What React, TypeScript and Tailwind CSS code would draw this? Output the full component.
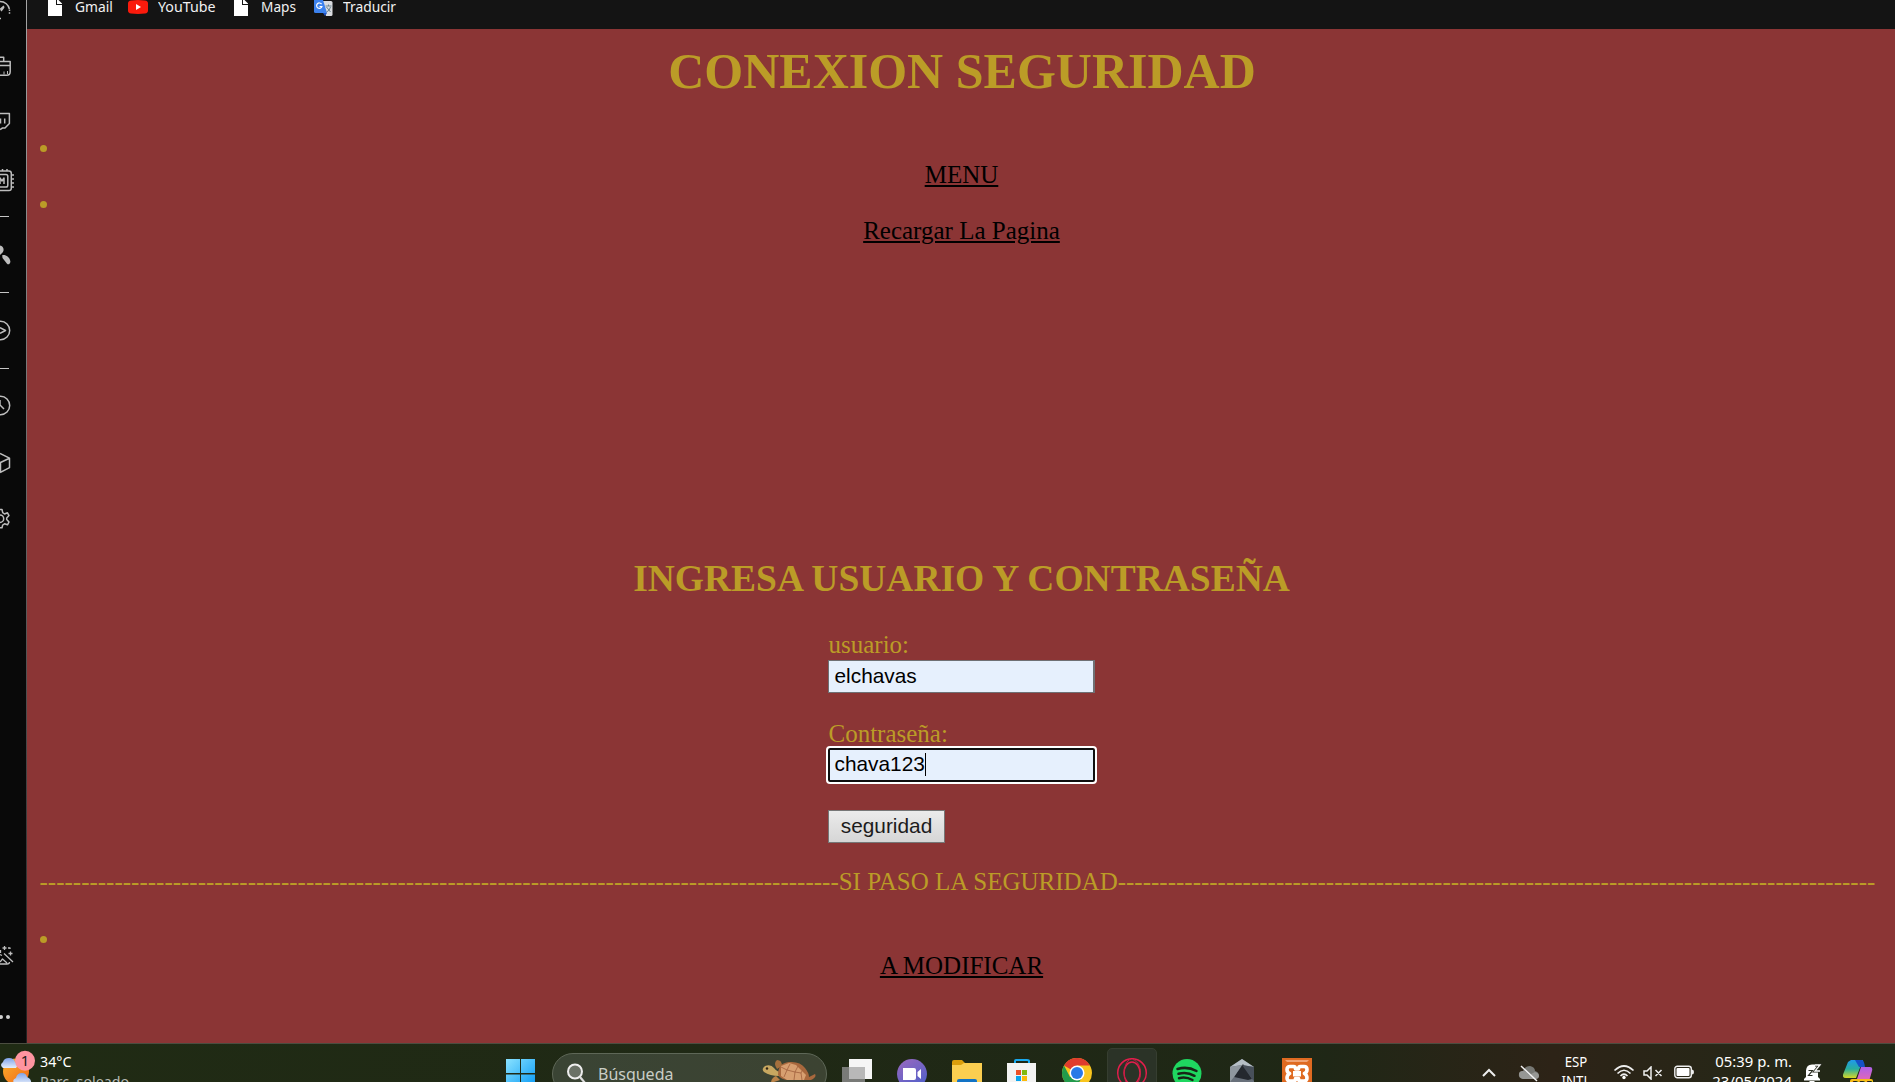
import type { ReactNode } from "react";

const LEFT_DASHES = "-".repeat(96);
const RIGHT_DASHES = "-".repeat(91);

function SideIcon({ className, h, children }: { className: string; h: number; children: ReactNode }) {
  return (
    <svg
      className={`block shrink-0 ${className}`}
      width="16"
      height={h}
      viewBox={`0 0 16 ${h}`}
      fill="none"
      stroke="#bdbdbd"
      strokeWidth="1.5"
      strokeLinejoin="round"
    >
      {children}
    </svg>
  );
}

function Divider({ className }: { className: string }) {
  return <div className={`h-px w-[9px] shrink-0 bg-[#c5c5c5] ${className}`} />;
}

function Sidebar() {
  return (
    <nav className="flex h-full w-[27px] shrink-0 flex-col overflow-hidden bg-[#090909]">
      <SideIcon className="" h={24}>
        <path d="M0 1.5C5 1.5 8.6 5 9.4 9" />
        <path d="M9.5 9.5V15" strokeDasharray="1.5 1.2" />
        <path d="M0 9.5 4 6M1 11l3-4M0 18.5h1" />
      </SideIcon>
      <SideIcon className="mt-[30px]" h={26}>
        <path d="M0 3.2h3.700v4M0 7.500h10.200v10.200q0 3.500-3.500 3.500H0M0 11.500h10" />
        <path d="M4 17.500v3M7.500 17v3" strokeWidth="1" />
      </SideIcon>
      <SideIcon className="mt-[30px]" h={24}>
        <path d="M0 3.500h9.400v10L5 18H2.500L0 19.500M4.700 8.500v5M.5 8.500v5" />
      </SideIcon>
      <SideIcon className="mt-[32px]" h={28}>
        <path d="M0 5h9q2.300 0 2.300 2.300v15q0 2.300-2.300 2.300H0M0 8.500h6q1.800 0 1.800 1.800v9q0 1.800-1.800 1.800H0" />
        <path d="M2.500 3v2M7 3v2M11 9h3M11 13h3M11 17h3M11 21h3M0 18v-6l2 3 2-3v6" />
      </SideIcon>
      <Divider className="mt-[22px]" />
      <SideIcon className="mt-[27px]" h={24}>
        <path
          d="M0 1.500C3.500 2 4.500 6 2.800 8.200L0 11ZM2.200 11.200C4.600 10 10 12.600 10.400 17.500 10.200 20 8.300 21.300 6.800 19.500L2.500 14Z"
          fill="#bdbdbd"
          stroke="none"
        />
      </SideIcon>
      <Divider className="mt-[24px]" />
      <SideIcon className="mt-[27px]" h={22}>
        <circle cx=".5" cy="10.500" r="9.200" />
        <path d="M0 7.600 5.500 10.500 0 13.400" />
      </SideIcon>
      <Divider className="mt-[26px]" />
      <SideIcon className="mt-[26px]" h={22}>
        <circle cx=".5" cy="10.500" r="9.200" />
        <path d="M0 5v5l4 4" />
      </SideIcon>
      <SideIcon className="mt-[34px]" h={24}>
        <path d="m0 2.500 9.500 4.700v9.400L0 21.500M.5 11.500v10M.5 11.500l9-4.300M0 11.300l.5.2" />
      </SideIcon>
      <SideIcon className="mt-[32px]" h={24}>
        <path d="M0 2.500h2l.7 3.200L4.500 7l3-1.200 1.500 2.800L6.700 11v1.500L9 15l-1.500 2.800-3-1L2.700 18 2 20.800H0" />
        <circle cx="0" cy="11.700" r="3.700" />
      </SideIcon>
      <SideIcon className="mt-[412px]" h={24}>
        <path
          d="M0 21h7q2.500 0 2.500-2M0 19l2.500-3L7 20M0 11.500l2 1M4 10.500l9 8.500M4.500 3v4M2.500 5h4M10.500 8.500v4M8.500 10.500h4M.5 7v3M8 5h2v1"
          strokeWidth="1.300"
        />
      </SideIcon>
      <SideIcon className="mt-[46px]" h={8}>
        <g fill="#d0d0d0" stroke="none">
          <circle cx="1" cy="4" r="2" />
          <circle cx="8" cy="4" r="2" />
        </g>
      </SideIcon>
    </nav>
  );
}

function PageFile() {
  return (
    <svg width="15" height="20" viewBox="0 0 15 20" className="block">
      <path d="M0 0h8v5h6v11H0Z" fill="#fff" />
      <path d="M9 0h1.500L14 3.500V4H9Z" fill="#fff" />
    </svg>
  );
}

function Bookmarks() {
  return (
    <header className="flex h-[29px] w-full shrink-0 bg-[#141414] pl-[21px] font-['Noto_Sans',sans-serif] text-[14.700px] leading-[20px] text-[#f1f1f1]">
      <a className="flex w-[80px]">
        <PageFile />
        <span className="-mt-[4px] ml-[12px] origin-left scale-x-[0.94]">Gmail</span>
      </a>
      <a className="flex w-[106px]">
        <svg width="20" height="15" viewBox="0 0 20 15" className="block">
          <path d="M3 .5Q10-.5 17 .5q3 .3 3 3v7q0 2.700-3 3-7 .9-14 0-3-.3-3-3v-7Q0 .8 3 .5Z" fill="#fa1a0c" />
          <path d="m8 4 5 3-5 3Z" fill="#fff" />
        </svg>
        <span className="-mt-[4px] ml-[10px] origin-left scale-x-[0.97]">YouTube</span>
      </a>
      <a className="flex w-[80px]">
        <PageFile />
        <span className="-mt-[4px] ml-[12px] origin-left scale-x-[0.93]">Maps</span>
      </a>
      <a className="flex">
        <svg width="19" height="17" viewBox="0 0 19 17" className="block">
          <path d="M8 1h9q1.500 0 1.500 1.500v12q0 1.500-1.500 1.500h-5Z" fill="#dadce0" />
          <path d="M0 0h9l4 13H1.500Q0 13 0 11.500Z" fill="#3c82ee" />
          <path d="M9 13h4l-2 3Z" fill="#1e53c5" />
          <path d="M7.600 4.200A2.700 2.700 0 1 0 7.900 6.500H5.500" fill="none" stroke="#fff" strokeWidth="1.200" />
          <path d="M11.500 6h6M14.500 4.500V6M12.500 7l4 5M16.500 7q-1 4-4 5" fill="none" stroke="#6a8590" />
        </svg>
        <span className="-mt-[4px] ml-[10px] origin-left scale-x-[0.94]">Traducir</span>
      </a>
    </header>
  );
}

function Item({ children }: { children: ReactNode }) {
  return (
    <li className="block">
      <div className="flex h-[28px] items-start">
        <span className="mt-[12px] block size-[7px] rounded-full bg-[#bb9c27]" />
      </div>
      <a className="block h-[28px] text-center text-black underline">{children}</a>
    </li>
  );
}

function SecurityPage() {
  return (
    <main className="flex min-h-0 flex-1 flex-col overflow-hidden bg-[#8b3535] pt-[14px] pr-[12px] pl-[13px] font-['Liberation_Serif',serif] text-[25px] leading-[28px] text-[#bb9c27]">
      <h1 className="h-[56px] pl-px text-center text-[50px] leading-[56px] font-bold">CONEXION SEGURIDAD</h1>
      <ul className="mt-[34px] flex flex-col">
        <Item>MENU</Item>
        <Item>Recargar La Pagina</Item>
      </ul>
      <h2 className="mt-[312px] h-[44px] text-center text-[37.500px] leading-[43px] font-bold">
        INGRESA USUARIO Y CONTRASEÑA
      </h2>
      <form className="mx-auto mt-[30px] flex w-[267px] flex-col items-start">
        <label className="h-[29px] pl-[0.500px]">usuario:</label>
        <div className="h-[33px] w-[267px] border border-r-2 border-[#6f7074] bg-[#e6f0fd] pl-[5.500px] font-['Liberation_Sans',sans-serif] text-[20.830px] leading-[30px] text-black">
          elchavas
        </div>
        <label className="mt-[27px] h-[28px] pl-[0.500px]">Contraseña:</label>
        <div className="flex h-[34px] w-[267px] rounded-[2px] border-2 border-[#101010] bg-[#e6f0fd] pl-[4.500px] font-['Liberation_Sans',sans-serif] text-[20.830px] leading-[28px] text-black outline-[2.500px] outline-white">
          <span>chava123</span>
          <span className="mt-[3px] h-[23px] w-px bg-black" />
        </div>
        <div className="mt-[28px] h-[33px] w-[117px] border border-[#767676] bg-linear-to-b from-[#ebebeb] to-[#d6d6d6] text-center font-['Liberation_Sans',sans-serif] text-[20.830px] leading-[30px] text-[#1c1c1c]">
          seguridad
        </div>
      </form>
      <p className="mt-[25px] -ml-[0.500px] h-[28px] whitespace-nowrap">
        {LEFT_DASHES}SI PASO LA SEGURIDAD{RIGHT_DASHES}
      </p>
      <ul className="mt-[28px]">
        <Item>A MODIFICAR</Item>
      </ul>
    </main>
  );
}

function AppCell({ children, active = false }: { children: ReactNode; active?: boolean }) {
  return (
    <div className="flex w-[55px] shrink-0 justify-center">
      <div
        className={
          active
            ? "mt-[4px] flex h-[50px] w-[50px] justify-center rounded-[5px] border border-[#363e30] bg-[#2b3327] pt-[9px]"
            : "flex w-[50px] justify-center pt-[14px]"
        }
      >
        <svg width="32" height="32" viewBox="0 0 32 32" className="block shrink-0">
          {children}
        </svg>
      </div>
    </div>
  );
}

function Weather() {
  return (
    <div className="flex w-[506px] shrink-0">
      <svg width="40" height="38" viewBox="0 0 40 38" className="block">
        <defs>
          <linearGradient id="sun" x1="0" y1="0" x2="1" y2="1">
            <stop offset="0" stopColor="#fbb22a" />
            <stop offset="1" stopColor="#f0661b" />
          </linearGradient>
          <linearGradient id="cloud" x1="0" y1="0" x2="0" y2="1">
            <stop offset="0" stopColor="#7fa3ea" />
            <stop offset="1" stopColor="#e4edfb" />
          </linearGradient>
        </defs>
        <circle cx="16" cy="27.500" r="13" fill="url(#sun)" />
        <path d="M3 24q-4-3 0-6 1-4 6-4 5 0 6 4 4 2 1 6Z" fill="url(#cloud)" />
        <path d="M15 40q-4-4 1-6 1-5 6-5 4 0 5 4 5 2 4 7Z" fill="url(#cloud)" />
        <circle cx="25" cy="16.800" r="10" fill="#fe94a0" />
        <text x="25" y="22" textAnchor="middle" fontFamily="Noto Sans, sans-serif" fontSize="15" fill="#1b1b1b">
          1
        </text>
      </svg>
      <div className="pt-[7px] text-[15px] leading-[20px]">
        <div className="origin-left scale-x-[0.95] text-white">34°C</div>
        <div className="origin-left scale-x-[0.95] text-[#b7bab4]">Parc. soleado</div>
      </div>
    </div>
  );
}

function Turtle() {
  return (
    <svg width="54" height="32" viewBox="0 0 54 32" className="block">
      <path d="M15 10Q11 4 15 1q5 0 5 6Z" fill="#a5703d" />
      <path d="M17 17q-9 0-15-4-3-3 1-6 6-2 9 2 3 4 7 4Z" fill="#c7a760" />
      <circle cx="5" cy="9.500" r="1.200" fill="#302415" />
      <path d="M14 17Q9 19 9 24l9-3Z" fill="#b98248" />
      <path d="M16 16Q16 4 27 3q11-1 16 6 4 5 4 9l6-3q2 3-4 6H27q-8 0-11-5Z" fill="#a8683d" />
      <path d="m19 7 8-3 7 2 5 5 5 5-2 5H25l-6-4Z" fill="#d79f70" />
      <path
        d="m19 8 6 3 3-6M25 11l-3 7M25 11l8 2 3-6M33 13l-1 8M33 13l6 1 2-4M39 14l1 7"
        fill="none"
        stroke="#a0603c"
        strokeWidth=".8"
      />
    </svg>
  );
}

function Taskbar() {
  return (
    <footer className="flex h-[39px] w-full shrink-0 overflow-hidden border-t border-[#4b4d40] bg-linear-to-r from-[#202b14] from-0% via-[#1f2716] via-75% to-[#222817] font-['Noto_Sans',sans-serif] text-white">
      <Weather />
      <svg width="29" height="32" viewBox="0 0 29 32" className="mt-[15px] block shrink-0">
        <defs>
          <linearGradient id="win" gradientUnits="userSpaceOnUse" x1="0" y1="0" x2="29" y2="29">
            <stop offset="0" stopColor="#8ae2ff" />
            <stop offset="1" stopColor="#0799f5" />
          </linearGradient>
        </defs>
        <path d="M0 0h14v14H0ZM15 0h14v14H15ZM0 15.500h14v14H0ZM15 15.500h14v14H15Z" fill="url(#win)" />
      </svg>
      <div className="mt-[9px] ml-[17px] flex h-[42px] w-[275px] shrink-0 rounded-full border border-[#5e6757] bg-linear-to-r from-[#3a4434] to-[#3c4332] pl-[14px]">
        <svg width="20" height="22" viewBox="0 0 20 22" className="mt-[9px] block shrink-0">
          <circle cx="8" cy="8.500" r="7" fill="#6a7166" stroke="#eee" strokeWidth="2" />
          <path d="m13 14 5 6" stroke="#ddd" strokeWidth="2.200" />
        </svg>
        <span className="mt-[8px] ml-[11px] origin-left scale-x-[0.94] text-[17px] leading-[24px] text-[#c9cdc6]">
          Búsqueda
        </span>
        <div className="mt-[5px] mr-[10px] ml-auto">
          <Turtle />
        </div>
      </div>
      <div className="ml-[2px] flex shrink-0">
        <AppCell>
          <path d="M8 1h23v20H8Z" fill="#f5f5f5" />
          <path d="M1 9h23v19H1Z" fill="#858585" fillOpacity=".88" />
          <path d="M8 9h16v12H8Z" fill="#b8b8b8" />
        </AppCell>
        <AppCell>
          <defs>
            <linearGradient id="chat" x1="0" y1="0" x2="0.600" y2="1">
              <stop offset="0" stopColor="#9b68be" />
              <stop offset="1" stopColor="#5360c9" />
            </linearGradient>
          </defs>
          <circle cx="16" cy="16" r="15" fill="url(#chat)" />
          <path d="M7 10h11q2 0 2 2v8q0 2-2 2H7ZM21.500 14l3.500-3v10l-3.500-3Z" fill="#fff" />
        </AppCell>
        <AppCell>
          <path d="M1 4q0-2 2-2h8l3 3v5H1Z" fill="#dc9e0c" />
          <path d="M1 7h9l3-2h18v26H1Z" fill="#fbce50" />
          <path d="M6 23q0-2 2-2h16q2 0 2 2v9H6Z" fill="#1273c5" />
        </AppCell>
        <AppCell>
          <path d="M9 6V3q0-1 1-1h11q2 0 2 1v3" fill="none" stroke="#19a9ef" strokeWidth="2" />
          <path d="M1 5h29v25H1Z" fill="#f3f3f3" />
          <path d="M10 12h5v5h-5Z" fill="#ee5126" />
          <path d="M16 12h5v5h-5Z" fill="#82b910" />
          <path d="M10 18h5v5h-5Z" fill="#09a4ec" />
          <path d="M16 18h5v5h-5Z" fill="#fbba09" />
        </AppCell>
        <AppCell>
          <circle cx="16" cy="15" r="15" fill="#f9c51d" />
          <path d="M16 15 3 7.500A15 15 0 0 1 29 7.500H16Z" fill="#df3c2e" />
          <path d="M3 7.500A15 15 0 0 0 15 30l5-9-4-6-7 4Z" fill="#229a4b" />
          <circle cx="16" cy="15" r="7.500" fill="#fff" />
          <circle cx="16" cy="15" r="6" fill="#2879e8" />
        </AppCell>
        <AppCell active>
          <circle cx="16" cy="15" r="14.300" fill="none" stroke="#e31e4c" strokeWidth="1.500" />
          <ellipse cx="16" cy="15" rx="8" ry="11" fill="none" stroke="#e31e4c" strokeWidth="1.400" />
          <path d="M15 1C6 4 6 26 15 29M17 1.500C27 5 27 25 17 28.500" fill="none" stroke="#c71c44" />
        </AppCell>
        <AppCell>
          <circle cx="16" cy="15.500" r="14.500" fill="#1fd760" />
          <path
            d="M6.500 11q10-3 19 2M7.500 15.800q8.500-2.300 16 2M8 20.200q7-1.800 13.500 1.800"
            fill="none"
            stroke="#182416"
            strokeWidth="2.500"
            strokeLinecap="round"
          />
        </AppCell>
        <AppCell>
          <path d="m16 1 12 8v15l-12 7-12-7V9Z" fill="#68707a" />
          <path d="M16 1 4 9l12-2 12 2Z" fill="#b6bfc6" />
          <path d="m17 6 9 15-4 1-14-3Z" fill="#24282e" />
          <path d="m4 9 12-2-8 12-4 5Z" fill="#8f979e" />
          <path d="m28 9-12-2 10 14 2 2Z" fill="#48505a" />
        </AppCell>
        <AppCell>
          <path d="M1 0h30v32H1Z" fill="#df6a21" />
          <path d="M4 2h24l-2 2H6Z" fill="#f0a374" />
          <path
            d="M12.500 8.500q2 0 2 2.500h3q0-2.500 2-2.500H23q3 0 3 3 0 3-2.500 4Q26 17 26 20q0 3-3 3h-3.500q-2 0-2-2.500h-3q0 2.500-2 2.500H9q-3 0-3-3t2.500-4.500Q6 14.500 6 11.500q0-3 3-3Z"
            fill="none"
            stroke="#fff"
            strokeWidth="3.600"
            strokeLinejoin="round"
          />
          <path d="M12 13h8v5.500h-8Z" fill="#fff" />
        </AppCell>
      </div>
      <div className="flex min-w-0 flex-1 bg-linear-to-r from-[#1f2716] via-[#2d2317] via-40% to-[#202917] pl-[157px]">
        <svg width="16" height="12" viewBox="0 0 16 12" className="mt-[23px] block shrink-0">
          <path d="m2 9 6-6 6 6" fill="none" stroke="#eee" strokeWidth="2" />
        </svg>
        <svg width="22" height="18" viewBox="0 0 22 18" className="mt-[21px] ml-[21px] block shrink-0">
          <path d="M5 14q-5-1-4-5 1-3 4-3 2-5 7-5 5 1 5 5 4 1 4 5-1 3-4 3Z" fill="#777874" />
          <path d="M1 9q0-3 4-3 3 0 6 4l6-3q4 1 4 4 0 3-4 3H5q-4-1-4-5" fill="#969794" />
          <path d="m3 1 16 15" stroke="#f2f2f2" strokeWidth="1.500" />
        </svg>
        <div className="mt-[8px] ml-[14px] w-[44px] shrink-0 text-center text-[14.500px] leading-[19px]">
          <div className="scale-x-[0.91]">ESP</div>
          <div className="scale-x-[0.91]">INTL</div>
        </div>
        <svg
          width="22"
          height="16"
          viewBox="0 0 22 16"
          className="mt-[20px] ml-[15px] block shrink-0"
          fill="none"
          stroke="#eee"
          strokeWidth="1.700"
        >
          <path d="M1.500 6.500q9.500-9 19 0M4.500 9.500q6.500-6.500 13 0M7.500 12q3.500-3.500 7 0" />
          <circle cx="11" cy="13.500" r="1.700" fill="#fff" stroke="none" />
        </svg>
        <svg
          width="20"
          height="14"
          viewBox="0 0 20 14"
          className="mt-[22px] ml-[8px] block shrink-0"
          fill="none"
          stroke="#eee"
          strokeWidth="1.500"
        >
          <path d="M1 5h3l4-4v12L4 9H1ZM12.500 4l6 6M18.500 4l-6 6" />
        </svg>
        <svg width="20" height="14" viewBox="0 0 20 14" className="mt-[21px] ml-[11px] block shrink-0">
          <rect x=".8" y="1.300" width="16.500" height="11.500" rx="2.500" fill="none" stroke="#eee" strokeWidth="1.400" />
          <rect x="2.500" y="3" width="13" height="8" rx="1" fill="#fff" />
          <path d="M18 4.500q2 0 2 2.500t-2 2.500Z" fill="#eee" />
        </svg>
        <div className="mt-[7px] ml-[10px] w-[88px] shrink-0 text-right text-[15px] leading-[20px] whitespace-nowrap">
          <div className="origin-right scale-x-[0.99]">05:39 p. m.</div>
          <div className="origin-right">23/05/2024</div>
        </div>
        <svg width="20" height="22" viewBox="0 0 20 22" className="mt-[18px] ml-[11px] block shrink-0">
          <path d="M3 15V8.500Q3.500 2.500 9 2.500h6V15l2 2v1.500H1V17ZM6.500 19h5v3h-5Z" fill="#fff" />
          <path d="M5.500 8.500h4l-4 5h4" fill="none" stroke="#2b2d22" strokeWidth="1.200" />
          <path d="M12 3h5l-5 6h5" fill="none" stroke="#2b2d22" strokeWidth="2.800" />
          <path d="M12 3h5l-5 6h5" fill="none" stroke="#fff" strokeWidth="1.300" />
        </svg>
        <svg width="30" height="26" viewBox="0 0 30 26" className="mt-[15px] ml-[20px] block shrink-0">
          <defs>
            <linearGradient id="blue" x1="0" y1="0" x2="0" y2="1">
              <stop offset="0" stopColor="#2099ec" />
              <stop offset=".5" stopColor="#28ad9d" />
              <stop offset="1" stopColor="#d8d725" />
            </linearGradient>
            <linearGradient id="pink" x1="0" y1="0" x2="0" y2="1">
              <stop offset="0" stopColor="#ae60e9" />
              <stop offset="1" stopColor="#f56ba3" />
            </linearGradient>
          </defs>
          <path d="M8 1h12l-7 18H3q-5 0-2-6l4-10Z" fill="url(#blue)" />
          <path d="M12 1h7q2 0 3 7h-6Z" fill="#1551c6" />
          <path d="M18 8h9q3 0 2 4l-4 14H12Z" fill="url(#pink)" />
          <rect x="7" y="20" width="23" height="10" rx="2" fill="#f6bd18" />
          <text x="9" y="30" fontFamily="Noto Sans, sans-serif" fontWeight="700" fontSize="11" fill="#252515">
            PRE
          </text>
        </svg>
      </div>
    </footer>
  );
}

export default function App() {
  return (
    <div className="flex h-[1082px] w-[1895px] flex-col overflow-hidden">
      <div className="flex h-[1043px] shrink-0">
        <Sidebar />
        <div className="-ml-px w-px shrink-0 bg-linear-to-b from-[#a5a5a5] via-[#666] to-[#222]" />
        <div className="flex min-w-0 flex-1 flex-col">
          <Bookmarks />
          <SecurityPage />
        </div>
      </div>
      <Taskbar />
    </div>
  );
}
